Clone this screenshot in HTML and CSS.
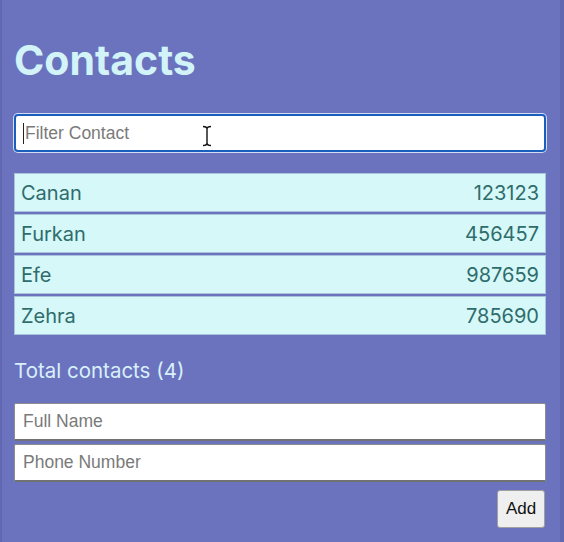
FILE: index.html
```html
<!DOCTYPE html>
<html lang="en">
<head>
<meta charset="utf-8">
<title>Contacts</title>
<link rel="stylesheet" href="styles.css">
</head>
<body>
<div class="app">
  <h1 class="title">Contacts</h1>
  <div class="filter-wrap">
    <input class="filter" type="text" placeholder="Filter Contact">
    <span class="caret"></span>
    <svg class="ibeam" width="10" height="22" viewBox="0 0 10 22">
      <path d="M1 1.5 Q5 1.5 5 4 Q5 1.5 9 1.5 M5 4 V18 M1 20.5 Q5 20.5 5 18 Q5 20.5 9 20.5" fill="none" stroke="#fff" stroke-width="3"/>
      <path d="M1 1.5 Q5 1.5 5 4 Q5 1.5 9 1.5 M5 4 V18 M1 20.5 Q5 20.5 5 18 Q5 20.5 9 20.5" fill="none" stroke="#111" stroke-width="1.4"/>
    </svg>
  </div>
  <ul class="list">
    <li class="row"><span>Canan</span><span>123123</span></li>
    <li class="row"><span>Furkan</span><span>456457</span></li>
    <li class="row"><span>Efe</span><span>987659</span></li>
    <li class="row"><span>Zehra</span><span>785690</span></li>
  </ul>
  <p class="total">Total contacts (4)</p>
  <form class="add-form">
    <input class="field" type="text" placeholder="Full Name">
    <input class="field" type="text" placeholder="Phone Number">
    <div class="actions"><button class="add-btn" type="button">Add</button></div>
  </form>
</div>
</body>
</html>
```

FILE: styles.css
```css
html, body {
  margin: 0;
  padding: 0;
  background: #6b73bf;
}
body {
  font-family: Inter, "Liberation Sans", sans-serif;
}
.app {
  min-height: 542px;
  box-sizing: border-box;
  border-left: 2px solid #6168b2;
  border-right: 4px solid #6168b2;
  padding: 36px 14px 0 12px;
}
.title {
  margin: 0;
  font-size: 41px;
  line-height: 48px;
  font-weight: 700;
  color: #d2f4f8;
}
.filter-wrap {
  position: relative;
  margin-top: 30px;
}
.filter {
  display: block;
  box-sizing: border-box;
  width: 100%;
  height: 38px;
  margin: 0;
  border: 2px solid #1b5fbe;
  border-radius: 4px;
  box-shadow: 0 0 0 1px #d4dbf3;
  background: #fff;
  padding: 0 0 0 9px;
  font-family: "Liberation Sans", Arial, sans-serif;
  font-size: 17.5px;
  outline: none;
}
.filter::placeholder,
.field::placeholder {
  color: #7a7a7a;
}
.caret {
  position: absolute;
  left: 9px;
  top: 9px;
  width: 1px;
  height: 21px;
  background: #222;
}
.ibeam {
  position: absolute;
  left: 188px;
  top: 11px;
}
.list {
  list-style: none;
  margin: 21px 0 0;
  padding: 0;
  display: flex;
  flex-direction: column;
  gap: 2px;
}
.row {
  box-sizing: border-box;
  height: 39px;
  display: flex;
  align-items: center;
  justify-content: space-between;
  padding: 0 6px 0 6px;
  background: #d6f8f8;
  border: 1px solid #a8c4da;
  color: #2f6c6c;
  font-size: 20px;
}
.total {
  margin: 24px 0 0;
  font-size: 20.5px;
  line-height: 23px;
  color: #d8f0fa;
}
.add-form {
  margin-top: 21px;
  display: flex;
  flex-direction: column;
  gap: 3px;
}
.field {
  display: block;
  box-sizing: border-box;
  width: 100%;
  height: 38px;
  margin: 0;
  border: 1px solid #8d8d8d;
  border-bottom: 2px solid #727272;
  border-radius: 2px;
  background: #fff;
  padding: 0 0 0 8px;
  font-family: "Liberation Sans", Arial, sans-serif;
  font-size: 17.5px;
  outline: none;
}
.actions {
  display: flex;
  justify-content: flex-end;
  margin-top: 5px;
}
.add-btn {
  box-sizing: border-box;
  width: 48px;
  height: 38px;
  margin: 0 1px 0 0;
  border: 1px solid #a0a0a0;
  border-radius: 3px;
  background: #efefef;
  color: #111;
  font-family: "Liberation Sans", Arial, sans-serif;
  font-size: 17px;
  padding: 0;
}
```
